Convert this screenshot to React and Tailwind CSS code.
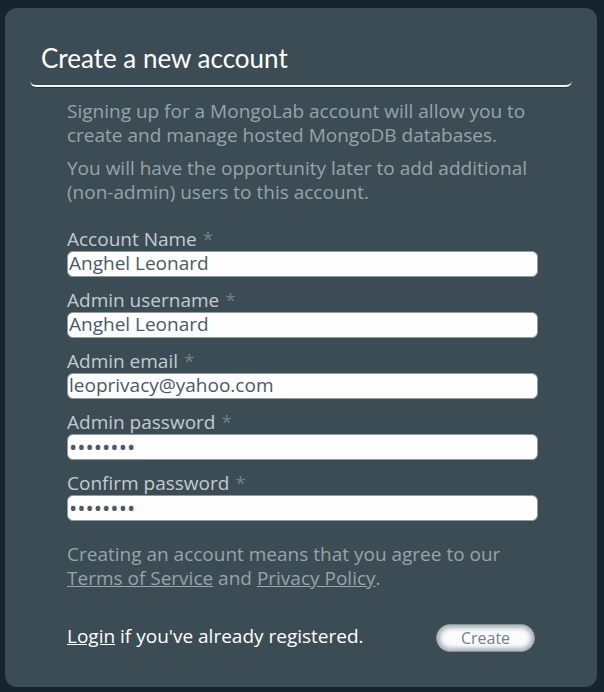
import { useState } from "react";

const FIELDS = [
  { id: "account", label: "Account Name", type: "text", value: "Anghel Leonard" },
  { id: "username", label: "Admin username", type: "text", value: "Anghel Leonard" },
  { id: "email", label: "Admin email", type: "email", value: "leoprivacy@yahoo.com" },
  { id: "password", label: "Admin password", type: "password", value: "password" },
  { id: "confirm", label: "Confirm password", type: "password", value: "password" },
];

function Field({ id, label, type, value: initial }) {
  const [value, setValue] = useState(initial);
  return (
    <div className="flex flex-col">
      <label htmlFor={id} className="text-[#c3cbd1]">
        {label} <span className="ml-px text-[#73808a]">*</span>
      </label>
      <input
        id={id}
        type={type}
        value={value}
        onChange={(e) => setValue(e.target.value)}
        className={`${type === "password" ? "text-[22px]" : "text-[19px]"} h-[26px] w-full rounded-md border border-[#8e9ba3] bg-[#fdfdfd] px-px pb-[2px] leading-[22px] text-[#485b66] outline-none`}
      />
    </div>
  );
}

export default function App() {
  return (
    <div className="min-h-screen bg-[#17232d] pt-2 pr-[7px] pb-[5px] pl-[5px] font-['Open_Sans','Noto_Sans',sans-serif] text-[19px] leading-6">
      <main className="rounded-xl bg-[#3c4c54] px-[25px] pt-8 pb-[35px]">
        <h1 className="rounded-b-md border-b-2 border-[#f1f3f6] px-[11px] pb-[9px] font-['Lato',sans-serif] text-[26px] leading-9 text-white shadow-[0_1px_0_#26333c]">
          Create a new account
        </h1>
        <form className="pt-3 pr-[34px] pl-[37px] text-[#98a3aa]" onSubmit={(e) => e.preventDefault()}>
          <div className="flex flex-col gap-[9px]">
            <p>Signing up for a MongoLab account will allow you to create and manage hosted MongoDB databases.</p>
            <p>You will have the opportunity later to add additional (non-admin) users to this account.</p>
          </div>
          <div className="mt-[23px] flex flex-col gap-[11px]">
            {FIELDS.map((field) => (
              <Field key={field.id} {...field} />
            ))}
          </div>
          <p className="mt-[21px]">
            Creating an account means that you agree to our{" "}
            <a href="#terms" className="underline">Terms of Service</a> and{" "}
            <a href="#privacy" className="underline">Privacy Policy</a>.
          </p>
          <div className="mt-[34px] flex items-start justify-between pr-[3px]">
            <p className="font-medium text-white">
              <a href="#login" className="underline">Login</a> if you've already registered.
            </p>
            <button
              type="submit"
              className="h-7 w-[99px] rounded-full border border-[#87939b] bg-[#fafbfc] text-base leading-6 text-[#71808a] shadow-[inset_0_0_4px_3px_#a9b3ba]"
            >
              Create
            </button>
          </div>
        </form>
      </main>
    </div>
  );
}
